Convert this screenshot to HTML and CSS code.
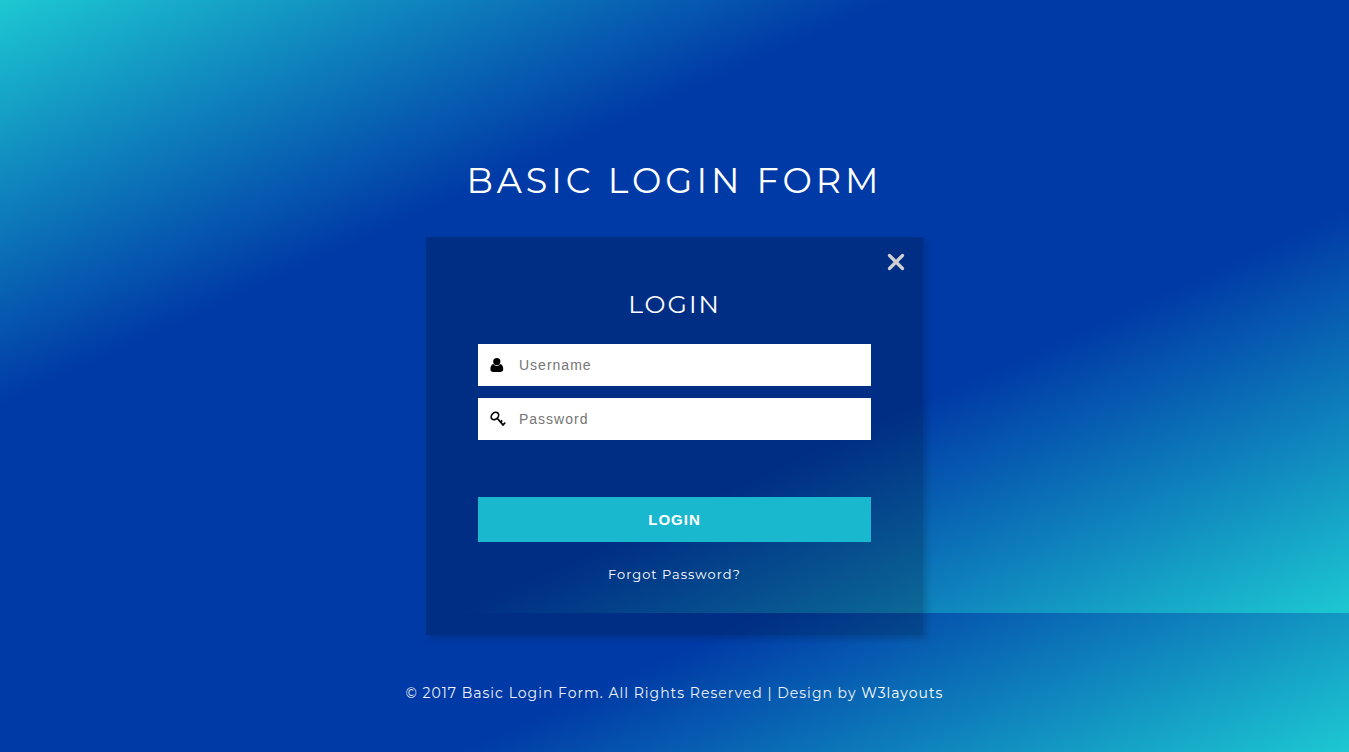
FILE: index.html
```html
<!DOCTYPE html>
<html lang="en">
<head>
<meta charset="utf-8">
<meta name="viewport" content="width=device-width, initial-scale=1">
<title>Basic Login Form</title>
<link rel="stylesheet" href="styles.css">
</head>
<body>
<h1 class="page-title">BASIC LOGIN FORM</h1>
<main class="card">
  <button class="close" type="button" aria-label="Close">
    <svg viewBox="0 0 18 18" width="18" height="18" aria-hidden="true"><path d="M2.5 2.5 15.5 15.5M15.5 2.5 2.5 15.5" fill="none" stroke="#d0d0d0" stroke-width="3.2" stroke-linecap="round"/></svg>
  </button>
  <h2 class="card-title">LOGIN</h2>
  <form class="form">
    <label class="field">
      <svg class="icon" viewBox="0 0 16 16" width="16" height="16" aria-hidden="true"><circle cx="6.800" cy="4.600" r="3.600"/><path d="M3.400 7C1.400 7.400.4 9.400.4 12.200.4 13.900 1.600 14.900 3.200 14.900H10.400C12 14.900 13.200 13.900 13.200 12.200 13.200 9.400 12.200 7.400 10.200 7 9.300 8.300 8.200 8.900 6.800 8.900S4.300 8.300 3.400 7Z"/></svg>
      <input class="input" type="text" placeholder="Username" aria-label="Username">
    </label>
    <label class="field">
      <svg class="icon" viewBox="0 0 16 16" width="16" height="16" aria-hidden="true"><g fill="none" stroke="#000"><ellipse cx="4.900" cy="5" rx="4.200" ry="3.200" transform="rotate(-45 4.900 5)" stroke-width="1.700"/><path d="M7.200 7.300 13.600 14.600M10.600 11.200 12.200 9.400M13 13.800 15.200 11.600" stroke-width="1.700"/></g></svg>
      <input class="input" type="password" placeholder="Password" aria-label="Password">
    </label>
    <button class="submit" type="submit">LOGIN</button>
  </form>
  <a class="forgot" href="#">Forgot Password?</a>
</main>
<footer class="footer">© 2017 Basic Login Form. All Rights Reserved | Design by <a class="credit" href="#">W3layouts</a></footer>
</body>
</html>
```
FILE: styles.css
```css
* {
  box-sizing: border-box;
}

html {
  min-height: 100%;
  background: #003aa5;
}

body {
  --sweep: linear-gradient(to bottom right, #1dc8d2, #003aa6 33%, #003aa6 67%, #1dc8d2);
  min-height: 100vh;
  margin: 0;
  padding: 157px 16px 40px;
  display: flex;
  flex-direction: column;
  align-items: center;
  background: var(--sweep) 0 0 / 100% 613px no-repeat, var(--sweep) 0 100% / 100% 613px no-repeat;
  color: #fff;
  font-family: Montserrat, Inter, sans-serif;
}

.page-title {
  margin: 0;
  font-size: 35px;
  font-weight: 400;
  line-height: 48px;
  letter-spacing: 4px;
  text-align: center;
}

.card {
  position: relative;
  width: 100%;
  max-width: 497px;
  margin-top: 32px;
  padding: 51px 52px;
  display: flex;
  flex-direction: column;
  align-items: center;
  background: rgba(0, 0, 0, 0.2);
  box-shadow: 4px 4px 6px rgba(0, 0, 0, 0.15);
}

.close {
  position: absolute;
  top: 16px;
  right: 18px;
  padding: 0;
  border: 0;
  background: none;
  cursor: pointer;
}

.close svg {
  display: block;
}

.card-title {
  margin: 0 0 24px;
  font-size: 25px;
  font-weight: 400;
  line-height: 32px;
  letter-spacing: 2px;
}

.form {
  width: 100%;
  display: flex;
  flex-direction: column;
  gap: 12px;
}

.field {
  height: 42px;
  padding: 0 12px;
  display: flex;
  align-items: center;
  gap: 13px;
  background: #fff;
}

.icon {
  flex: none;
}

.input {
  flex: 1;
  min-width: 0;
  padding: 0;
  border: 0;
  outline: 0;
  font: 14px "Liberation Sans", Arial, sans-serif;
  letter-spacing: 1px;
}

.input::placeholder {
  color: #757575;
}

.submit {
  height: 45px;
  margin-top: 45px;
  border: 0;
  background: #1ab8ce;
  color: #fff;
  font: bold 15px "Liberation Sans", Arial, sans-serif;
  letter-spacing: 1px;
  cursor: pointer;
}

.forgot {
  margin-top: 22px;
  color: #fff;
  font-size: 13px;
  line-height: 20px;
  letter-spacing: 1px;
  text-decoration: none;
}

.footer {
  margin-top: 46px;
  color: #f0f2f8;
  font-size: 14px;
  line-height: 24px;
  letter-spacing: 1px;
  text-align: center;
}

.credit {
  color: #fff;
  text-decoration: none;
}
```
